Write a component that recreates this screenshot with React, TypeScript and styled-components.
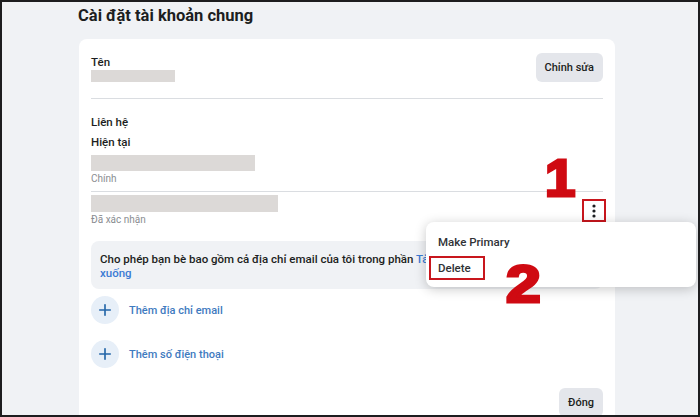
import React from 'react';
import styled, { createGlobalStyle } from 'styled-components';
import { Plus } from 'lucide-react';

const GlobalStyle = createGlobalStyle`
    body {
        margin: 0;
        font-family: Roboto, "Noto Sans", sans-serif;
        color: #1c1e21;
    }
`;

const Frame = styled.div`
    position: relative;
    width: 700px;
    height: 417px;
    box-sizing: border-box;
    border: 2px solid #1d1d1f;
    background: #f0f2f5;
    overflow: hidden;
    padding: 3px 0 0 76px;
`;

const Title = styled.h1`
    margin: 0;
    font-size: 16.5px;
    line-height: 22px;
    font-weight: 700;
    color: #1c1e21;
`;

const Card = styled.div`
    margin-top: 12px;
    margin-left: 1px;
    width: 536px;
    min-height: 400px;
    box-sizing: border-box;
    background: #ffffff;
    border-radius: 8px;
    padding: 14px 12px 0;
`;

const Row = styled.div`
    display: flex;
    justify-content: space-between;
    align-items: flex-start;
`;

const Column = styled.div`
    display: flex;
    flex-direction: column;
`;

const Label = styled.div<{ $gap?: number }>`
    font-size: 11.5px;
    line-height: 16px;
    font-weight: 500;
    margin-top: ${p => p.$gap || 0}px;
`;

const Blank = styled.div<{ $w: number; $h: number; $gap?: number }>`
    width: ${p => p.$w}px;
    height: ${p => p.$h}px;
    margin-top: ${p => p.$gap || 0}px;
    background: #dcd9d7;
`;

const Caption = styled.div`
    font-size: 10px;
    line-height: 16px;
    color: #8a8d91;
`;

const GreyButton = styled.button`
    border: none;
    border-radius: 6px;
    background: #e4e6eb;
    font-family: inherit;
    font-size: 11px;
    font-weight: 500;
    color: #1c1e21;
    height: 29px;
    padding: 0 9px;
`;

const Divider = styled.hr<{ $top: number; $bottom: number }>`
    border: none;
    border-top: 1px solid #dadde1;
    margin: ${p => p.$top}px 0 ${p => p.$bottom}px;
`;

const KebabButton = styled.button<{ $marked?: boolean }>`
    width: 24px;
    height: 23px;
    margin-top: 4px;
    margin-right: -3px;
    box-sizing: border-box;
    border: 2px solid ${p => (p.$marked ? '#c8161d' : 'transparent')};
    background: transparent;
    display: flex;
    align-items: center;
    justify-content: center;
    padding: 0;
`;

const InfoBox = styled.div`
    margin-top: 13px;
    display: flex;
    align-items: center;
    justify-content: space-between;
    background: #f0f2f5;
    border-radius: 8px;
    padding: 11px 16px 9px 9px;
`;

const InfoText = styled.div`
    width: 350px;
    font-size: 11.5px;
    line-height: 14px;
    font-weight: 500;
    color: #1c1e21;
`;

const Link = styled.span`
    color: #3b7bd4;
`;

const Toggle = styled.div`
    width: 36px;
    height: 20px;
    border-radius: 10px;
    background: #ced0d4;
`;

const AddRow = styled.div<{ $gap: number }>`
    display: flex;
    align-items: center;
    gap: 10px;
    margin-top: ${p => p.$gap}px;
`;

const AddCircle = styled.div`
    width: 28px;
    height: 28px;
    border-radius: 50%;
    background: #e7eff8;
    display: flex;
    align-items: center;
    justify-content: center;
    color: #2466a8;
`;

const AddText = styled.span`
    font-size: 11px;
    font-weight: 500;
    color: #3f7bbf;
`;

const Footer = styled.div`
    display: flex;
    justify-content: flex-end;
    margin-top: 20px;
`;

const Menu = styled.div`
    position: absolute;
    left: 424px;
    top: 220px;
    width: 270px;
    box-sizing: border-box;
    background: #ffffff;
    border-radius: 8px;
    box-shadow: 0 2px 12px rgba(0, 0, 0, 0.22);
    padding: 8px 0 7px;
    display: flex;
    flex-direction: column;
    align-items: flex-start;
    gap: 2px;
`;

const MenuItem = styled.div<{ $marked?: boolean }>`
    height: 24px;
    box-sizing: border-box;
    display: flex;
    align-items: center;
    font-size: 11.5px;
    font-weight: 500;
    color: #303236;
    margin-left: ${p => (p.$marked ? 3 : 12)}px;
    padding: ${p => (p.$marked ? '0 12px 0 7px' : '0')};
    border: ${p => (p.$marked ? '2px solid #c8161d' : 'none')};
`;

const StepNumber = styled.div<{ $x: number; $y: number; $scale: number }>`
    position: absolute;
    left: ${p => p.$x}px;
    top: ${p => p.$y}px;
    font-family: "Liberation Sans", Arial, sans-serif;
    font-size: 52px;
    line-height: 1;
    font-weight: 700;
    color: #cf0a12;
    -webkit-text-stroke: 3px #cf0a12;
    transform: scaleX(${p => p.$scale});
    transform-origin: left top;
`;

function Dots() {
    return (
        <svg width="4" height="14" viewBox="0 0 4 14">
            <circle cx="2" cy="2" r="1.6" fill="#1c1e21" />
            <circle cx="2" cy="7" r="1.6" fill="#1c1e21" />
            <circle cx="2" cy="12" r="1.6" fill="#1c1e21" />
        </svg>
    );
}

export default function App() {
    return (
        <Frame>
            <GlobalStyle />
            <Title>Cài đặt tài khoản chung</Title>
            <Card>
                <Row>
                    <Column>
                        <Label $gap={1}>Tên</Label>
                        <Blank $w={84} $h={12} />
                    </Column>
                    <GreyButton>Chỉnh sửa</GreyButton>
                </Row>
                <Divider $top={16} $bottom={15} />
                <Label>Liên hệ</Label>
                <Label $gap={4}>Hiện tại</Label>
                <Blank $w={164} $h={16} $gap={5} />
                <Caption>Chính</Caption>
                <Divider $top={4} $bottom={3} />
                <Row>
                    <Column>
                        <Blank $w={187} $h={17} />
                        <Caption>Đã xác nhận</Caption>
                    </Column>
                    <KebabButton $marked>
                        <Dots />
                    </KebabButton>
                </Row>
                <InfoBox>
                    <InfoText>
                        Cho phép bạn bè bao gồm cả địa chỉ email của tôi trong phần{' '}
                        <Link>Tải xuống</Link>
                    </InfoText>
                    <Toggle />
                </InfoBox>
                <AddRow $gap={7}>
                    <AddCircle>
                        <Plus size={18} strokeWidth={2.2} />
                    </AddCircle>
                    <AddText>Thêm địa chỉ email</AddText>
                </AddRow>
                <AddRow $gap={16}>
                    <AddCircle>
                        <Plus size={18} strokeWidth={2.2} />
                    </AddCircle>
                    <AddText>Thêm số điện thoại</AddText>
                </AddRow>
                <Footer>
                    <GreyButton>Đóng</GreyButton>
                </Footer>
            </Card>
            <Menu>
                <MenuItem>Make Primary</MenuItem>
                <MenuItem $marked>Delete</MenuItem>
            </Menu>
            <StepNumber $x={543} $y={150} $scale={1.05}>1</StepNumber>
            <StepNumber $x={504} $y={256} $scale={1.2}>2</StepNumber>
        </Frame>
    );
}
